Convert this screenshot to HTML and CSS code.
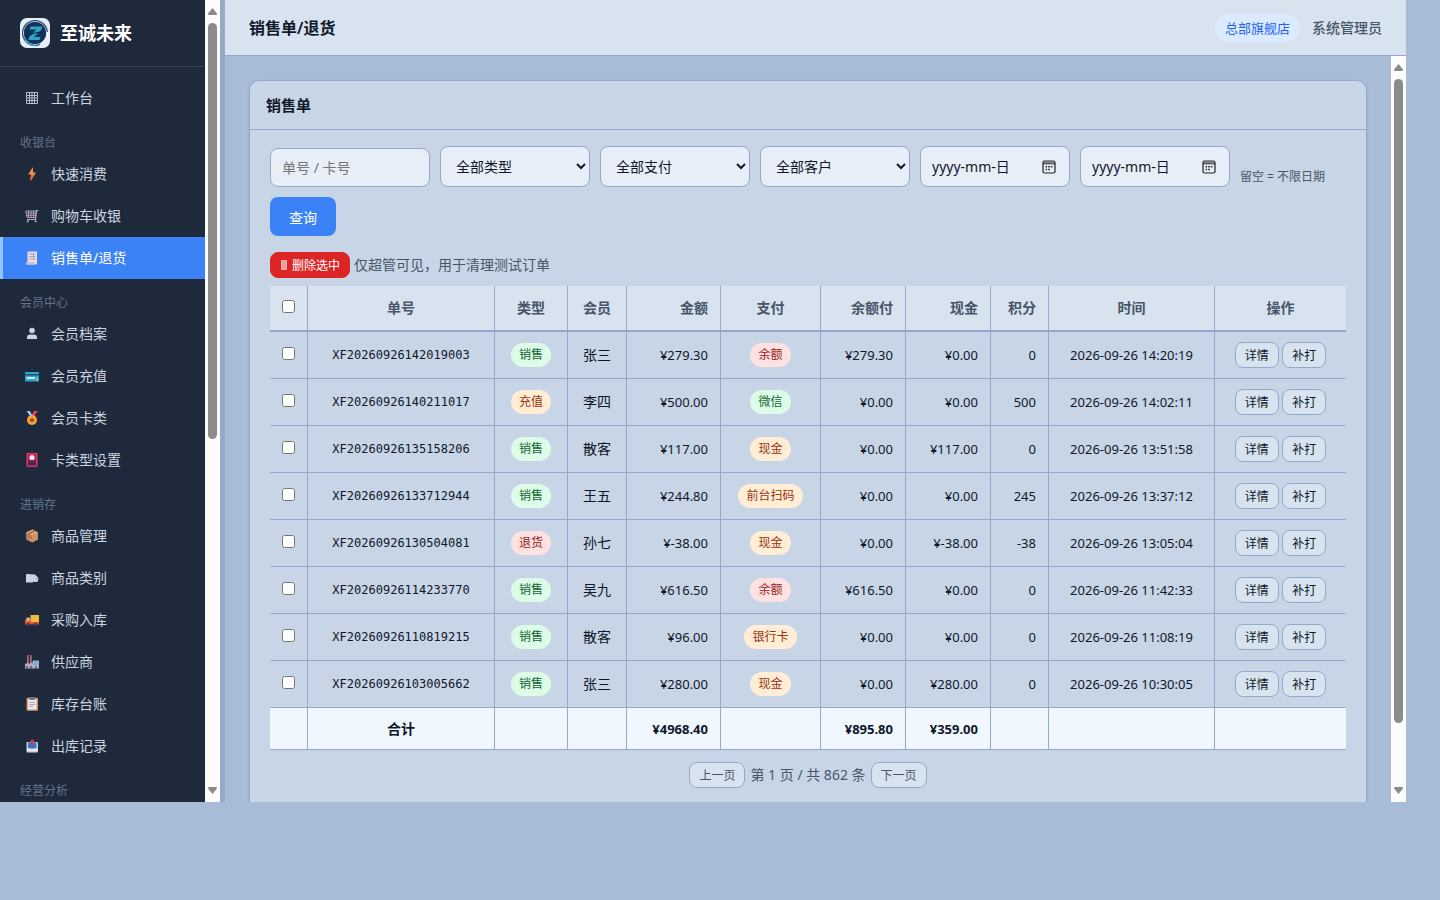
FILE: index.html
```html
<!DOCTYPE html>
<html lang="zh-CN">
<head>
    <meta charset="UTF-8">
    <meta name="viewport" content="width=device-width, initial-scale=1.0">
    <title>销售单/退货</title>
    <link rel="stylesheet" href="styles.css">
</head>
<body>
    <div class="app">
        <aside class="sidebar">
            <div class="sidebar-inner">
                <div class="brand">
                    <svg class="brand-logo" viewBox="0 0 30 30" aria-hidden="true">
                        <rect width="30" height="30" rx="7" fill="#e6edf5"/>
                        <circle cx="15" cy="15" r="13" fill="#1a3d6e"/>
                        <circle cx="15" cy="15" r="11.6" fill="none" stroke="#c3cfdd" stroke-width="1"/>
                        <circle cx="15" cy="15" r="10.8" fill="#12305c"/>
                        <path d="M5 22A12.3 12.3 0 0 0 16 27.3" fill="none" stroke="#2aa3bd" stroke-width="1.8"/>
                        <path d="M27.5 14A12.5 12.5 0 0 1 20 26.5" fill="none" stroke="#f4f7fa" stroke-width="1.8"/>
                        <path d="M10.5 8.500H22.500L21.500 11.500L14 19H20.500L19.500 22H8.500L9.500 18.500L16.500 11.500H9.500Z" fill="#2fa5bf"/>
                        <path d="M7 19.500Q12 14 23.500 14" fill="none" stroke="#0d2850" stroke-width="1"/>
                    </svg>
                    <span class="brand-name">至诚未来</span>
                </div>
                <nav class="nav">
                    <a class="nav-item" href="#"><span class="nav-icon"><svg viewBox="0 0 14 14"><path d="M1.500 1.500H12.500V12.500H1.500ZM4.500 1V13M7 1V13M9.500 1V13M1 4.500H13M1 7H13M1 9.500H13" fill="none" stroke="#b4c0d0"/></svg></span>工作台</a>
                    <div class="nav-title">收银台</div>
                    <a class="nav-item" href="#"><span class="nav-icon"><svg viewBox="0 0 14 14"><path d="M8 0L3 7.500H6L5.500 14L11 5.500H8Z" fill="#fb923c"/><path d="M6 7.500L5.500 14L8 10V7Z" fill="#ef6a4c"/></svg></span>快速消费</a>
                    <a class="nav-item" href="#"><span class="nav-icon"><svg viewBox="0 0 14 14"><path d="M13.500 1.500H11.500L10.500 10.500H2" fill="none" stroke="#b8adc2" stroke-width="1.200"/><path d="M.8 2H11L10.500 8.500H2ZM3.500 2V8.500M6 2V8.500M8.500 2V8.500M1 4.200H11M1.500 6.400H11" fill="none" stroke="#a99fb4"/><circle cx="2.800" cy="12.200" r="1.200" fill="#8591a8"/><circle cx="10.800" cy="12.200" r="1.200" fill="#8591a8"/></svg></span>购物车收银</a>
                    <a class="nav-item active" href="#"><span class="nav-icon"><svg viewBox="0 0 14 14"><path d="M2.500.5H12V13.500H1V11H2.500Z" fill="#e6dfec"/><path d="M4 3H10.500M4 5.500H10.500M4 8H10.500M8.500 2.500V8.500" stroke="#aaa0b8" fill="none"/><path d="M1 11H9.500V13.500H1Z" fill="#c9bfd3"/></svg></span>销售单/退货</a>
                    <div class="nav-title">会员中心</div>
                    <a class="nav-item" href="#"><span class="nav-icon"><svg viewBox="0 0 14 14"><circle cx="7" cy="3.500" r="2.800" fill="#cbd5e1"/><path d="M2 12V10.500Q2 7.500 5 7.500H9Q12 7.500 12 10.500V12Z" fill="#cbd5e1"/></svg></span>会员档案</a>
                    <a class="nav-item" href="#"><span class="nav-icon"><svg viewBox="0 0 14 14"><rect y="3" width="14" height="9.500" rx="1" fill="#2fa6d3"/><path d="M0 5H14V6.500H0Z" fill="#1b4a6b"/><path d="M1.800 8H10V10H1.800Z" fill="#d9e7ef"/><path d="M11.500 9.500H13V11.500H11.500Z" fill="#f5c344"/></svg></span>会员充值</a>
                    <a class="nav-item" href="#"><span class="nav-icon"><svg viewBox="0 0 14 14"><path d="M1 0H5L8 5L6 6.500Z" fill="#3487d6"/><path d="M13 0H9L6 5L8 6.500Z" fill="#e63c6d"/><path d="M2.500 0H4L7.500 5.500H6Z" fill="#f3eff5"/><circle cx="7" cy="9" r="5" fill="#f8a531"/><path d="M7 6L7.900 8L10 8.200L8.400 9.600L8.900 11.600L7 10.600L5.100 11.600L5.600 9.600L4 8.200L6.100 8Z" fill="#8c4b3a"/></svg></span>会员卡类</a>
                    <a class="nav-item" href="#"><span class="nav-icon"><svg viewBox="0 0 14 14"><rect x="1.500" width="11" height="14" rx="1" fill="#e93169"/><rect x="3" y="1.500" width="8" height="11" fill="#a81e5c"/><circle cx="7" cy="4.500" r="2.600" fill="#f7e9ee"/><path d="M3 8.500Q7 6.500 11 8.500V12.500H3Z" fill="#4c2a55"/></svg></span>卡类型设置</a>
                    <div class="nav-title">进销存</div>
                    <a class="nav-item" href="#"><span class="nav-icon"><svg viewBox="0 0 14 14"><path d="M7.500.5L13 3.500V10.500L7 13.500L1 10.500V3.500Z" fill="#b87a58"/><path d="M7.500.5L13 3.500L7 6.500L1 3.500Z" fill="#e3a878"/><path d="M7 6.500L13 3.500V10.500L7 13.500Z" fill="#cf9065"/><path d="M3.500 4.800L9.800 1.800" stroke="#86502f" stroke-width="1.200"/><circle cx="5.500" cy="11" r=".8" fill="#f0d9e4"/></svg></span>商品管理</a>
                    <a class="nav-item" href="#"><span class="nav-icon"><svg viewBox="0 0 14 14"><path d="M1 4Q1 2.500 2.500 3L10 3.500L13.500 7L12.500 11H9.500L8.500 10.500L7.500 11.500H1Z" fill="#cbd5e1"/><circle cx="11.500" cy="7.500" r=".6" fill="#64748b"/></svg></span>商品类别</a>
                    <a class="nav-item" href="#"><span class="nav-icon"><svg viewBox="0 0 14 14"><path d="M5.500 2H14V9H5.500Z" fill="#efbb3c"/><path d="M0 8L1.500 4.500H5.500V11H0Z" fill="#f26c2d"/><path d="M1.500 7.500L2.300 5H4.500V7.500Z" fill="#8bd6f5"/><path d="M0 9H14V11.500H0Z" fill="#e44b2d"/><circle cx="3" cy="11.500" r="1.700" fill="#4b3a58"/><circle cx="10.500" cy="11.500" r="1.700" fill="#4b3a58"/></svg></span>采购入库</a>
                    <a class="nav-item" href="#"><span class="nav-icon"><svg viewBox="0 0 14 14"><path d="M2 0H3.700V9H2ZM5 0H6.700V9H5Z" fill="#b26486"/><path d="M0 9L3.500 7.500V9L7 7.500V9L8 5.500H14V13.500H0Z" fill="#b2aabd"/><path d="M9.500 6.500H13V10H9.500Z" fill="#54bce4"/><path d="M1 11H3V13.500H1ZM5 11H7V13.500H5ZM10 11.500H12V13.500H10Z" fill="#6d5f7a"/></svg></span>供应商</a>
                    <a class="nav-item" href="#"><span class="nav-icon"><svg viewBox="0 0 14 14"><rect x="1.500" y=".8" width="11.500" height="13" rx="1" fill="#d6935b"/><path d="M3 2H11.500V12.500H3Z" fill="#efe8f3"/><path d="M4.500 0H10V3H4.500Z" fill="#7a7385"/><path d="M4.500 5.500H10M4.500 7.500H10M4.500 9.500H8" stroke="#a99fb8" fill="none"/></svg></span>库存台账</a>
                    <a class="nav-item" href="#"><span class="nav-icon"><svg viewBox="0 0 14 14"><rect x="1.500" y="3" width="11.500" height="10.500" rx="1" fill="#d7cfe0"/><path d="M3 3.500H11.500V9.500H3Z" fill="#1d7fd0"/><path d="M2 9.500H5L6 10.800H8.500L9.500 9.500H12.500V12H2Z" fill="#ece6f2"/><path d="M7.200 0L10.200 3.500H8.200V8H6.200V3.500H4.200Z" fill="#e0314f"/></svg></span>出库记录</a>
                    <div class="nav-title">经营分析</div>
                </nav>
            </div>
            <div class="scrollbar" aria-hidden="true">
                <svg class="scroll-arrow" viewBox="0 0 9 7"><path d="M4.500 0L9 5.500Q9 7 8 7H1Q0 7 0 5.500Z" fill="#8b8b8b"/></svg>
                <div class="scroll-track"><div class="scroll-thumb thumb-side"></div></div>
                <svg class="scroll-arrow" viewBox="0 0 9 7"><path d="M4.500 7L9 1.500Q9 0 8 0H1Q0 0 0 1.500Z" fill="#8b8b8b"/></svg>
            </div>
        </aside>

        <div class="main">
            <header class="topbar">
                <h1>销售单/退货</h1>
                <div class="topbar-right">
                    <span class="store">总部旗舰店</span>
                    <span class="user">系统管理员</span>
                </div>
            </header>

            <div class="content-wrap">
                <main class="content">
                    <section class="card">
                        <div class="card-header"><h2>销售单</h2></div>
                        <div class="card-body">
                            <form class="filters">
                                <input class="field keyword" type="text" placeholder="单号 / 卡号" aria-label="单号 / 卡号">
                                <select class="field" aria-label="类型"><option>全部类型</option></select>
                                <select class="field" aria-label="支付"><option>全部支付</option></select>
                                <select class="field" aria-label="客户"><option>全部客户</option></select>
                                <label class="field date">
                                    <input type="text" placeholder="yyyy-mm-日" aria-label="开始日期">
                                    <svg viewBox="0 0 14 14"><rect x="1" y="1" width="12" height="12" rx="1.500" fill="none" stroke="#1e1e1e" stroke-width="1.200"/><path d="M1 3.800H13" stroke="#1e1e1e"/><path d="M1.600 2.500H12.400" stroke="#777" stroke-width="1.500"/><path d="M6.200 6.800H7.700M8.800 6.800H10.300M3.600 9.500H5.100M6.200 9.500H7.700M3.600 6.800H5.100" stroke="#1e1e1e" stroke-width="1.400"/></svg>
                                </label>
                                <label class="field date">
                                    <input type="text" placeholder="yyyy-mm-日" aria-label="结束日期">
                                    <svg viewBox="0 0 14 14"><rect x="1" y="1" width="12" height="12" rx="1.500" fill="none" stroke="#1e1e1e" stroke-width="1.200"/><path d="M1 3.800H13" stroke="#1e1e1e"/><path d="M1.600 2.500H12.400" stroke="#777" stroke-width="1.500"/><path d="M6.200 6.800H7.700M8.800 6.800H10.300M3.600 9.500H5.100M6.200 9.500H7.700M3.600 6.800H5.100" stroke="#1e1e1e" stroke-width="1.400"/></svg>
                                </label>
                                <span class="hint">留空 = 不限日期</span>
                                <button type="button" class="btn-primary">查询</button>
                            </form>

                            <div class="batch">
                                <button type="button" class="btn-sm btn-danger"><svg viewBox="0 0 8 12"><path d="M1 1H7V11H1Z" fill="#f6b4b4"/><path d="M3 2V10M5 2V10" stroke="#ee8888"/></svg>删除选中</button>
                                <span>仅超管可见，用于清理测试订单</span>
                            </div>

                            <table class="orders">
                                <colgroup>
                                    <col class="c-check"><col class="c-no"><col class="c-type"><col class="c-member"><col class="c-amount"><col class="c-pay"><col class="c-money"><col class="c-money"><col class="c-points"><col class="c-time"><col>
                                </colgroup>
                                <thead>
                                    <tr>
                                        <th><input type="checkbox" aria-label="全选"></th>
                                        <th>单号</th>
                                        <th>类型</th>
                                        <th>会员</th>
                                        <th class="num">金额</th>
                                        <th>支付</th>
                                        <th class="num">余额付</th>
                                        <th class="num">现金</th>
                                        <th class="num">积分</th>
                                        <th>时间</th>
                                        <th>操作</th>
                                    </tr>
                                </thead>
                                <tbody>
                                    <tr>
                                        <td><input type="checkbox" aria-label="选择"></td>
                                        <td class="mono">XF20260926142019003</td>
                                        <td><span class="badge green">销售</span></td>
                                        <td>张三</td>
                                        <td class="num">¥279.30</td>
                                        <td><span class="badge red">余额</span></td>
                                        <td class="num">¥279.30</td>
                                        <td class="num">¥0.00</td>
                                        <td class="num">0</td>
                                        <td class="time">2026-09-26 14:20:19</td>
                                        <td><button type="button" class="btn-sm">详情</button> <button type="button" class="btn-sm">补打</button></td>
                                    </tr>
                                    <tr>
                                        <td><input type="checkbox" aria-label="选择"></td>
                                        <td class="mono">XF20260926140211017</td>
                                        <td><span class="badge orange">充值</span></td>
                                        <td>李四</td>
                                        <td class="num">¥500.00</td>
                                        <td><span class="badge green">微信</span></td>
                                        <td class="num">¥0.00</td>
                                        <td class="num">¥0.00</td>
                                        <td class="num">500</td>
                                        <td class="time">2026-09-26 14:02:11</td>
                                        <td><button type="button" class="btn-sm">详情</button> <button type="button" class="btn-sm">补打</button></td>
                                    </tr>
                                    <tr>
                                        <td><input type="checkbox" aria-label="选择"></td>
                                        <td class="mono">XF20260926135158206</td>
                                        <td><span class="badge green">销售</span></td>
                                        <td>散客</td>
                                        <td class="num">¥117.00</td>
                                        <td><span class="badge orange">现金</span></td>
                                        <td class="num">¥0.00</td>
                                        <td class="num">¥117.00</td>
                                        <td class="num">0</td>
                                        <td class="time">2026-09-26 13:51:58</td>
                                        <td><button type="button" class="btn-sm">详情</button> <button type="button" class="btn-sm">补打</button></td>
                                    </tr>
                                    <tr>
                                        <td><input type="checkbox" aria-label="选择"></td>
                                        <td class="mono">XF20260926133712944</td>
                                        <td><span class="badge green">销售</span></td>
                                        <td>王五</td>
                                        <td class="num">¥244.80</td>
                                        <td><span class="badge orange">前台扫码</span></td>
                                        <td class="num">¥0.00</td>
                                        <td class="num">¥0.00</td>
                                        <td class="num">245</td>
                                        <td class="time">2026-09-26 13:37:12</td>
                                        <td><button type="button" class="btn-sm">详情</button> <button type="button" class="btn-sm">补打</button></td>
                                    </tr>
                                    <tr>
                                        <td><input type="checkbox" aria-label="选择"></td>
                                        <td class="mono">XF20260926130504081</td>
                                        <td><span class="badge red">退货</span></td>
                                        <td>孙七</td>
                                        <td class="num">¥-38.00</td>
                                        <td><span class="badge orange">现金</span></td>
                                        <td class="num">¥0.00</td>
                                        <td class="num">¥-38.00</td>
                                        <td class="num">-38</td>
                                        <td class="time">2026-09-26 13:05:04</td>
                                        <td><button type="button" class="btn-sm">详情</button> <button type="button" class="btn-sm">补打</button></td>
                                    </tr>
                                    <tr>
                                        <td><input type="checkbox" aria-label="选择"></td>
                                        <td class="mono">XF20260926114233770</td>
                                        <td><span class="badge green">销售</span></td>
                                        <td>吴九</td>
                                        <td class="num">¥616.50</td>
                                        <td><span class="badge red">余额</span></td>
                                        <td class="num">¥616.50</td>
                                        <td class="num">¥0.00</td>
                                        <td class="num">0</td>
                                        <td class="time">2026-09-26 11:42:33</td>
                                        <td><button type="button" class="btn-sm">详情</button> <button type="button" class="btn-sm">补打</button></td>
                                    </tr>
                                    <tr>
                                        <td><input type="checkbox" aria-label="选择"></td>
                                        <td class="mono">XF20260926110819215</td>
                                        <td><span class="badge green">销售</span></td>
                                        <td>散客</td>
                                        <td class="num">¥96.00</td>
                                        <td><span class="badge orange">银行卡</span></td>
                                        <td class="num">¥0.00</td>
                                        <td class="num">¥0.00</td>
                                        <td class="num">0</td>
                                        <td class="time">2026-09-26 11:08:19</td>
                                        <td><button type="button" class="btn-sm">详情</button> <button type="button" class="btn-sm">补打</button></td>
                                    </tr>
                                    <tr>
                                        <td><input type="checkbox" aria-label="选择"></td>
                                        <td class="mono">XF20260926103005662</td>
                                        <td><span class="badge green">销售</span></td>
                                        <td>张三</td>
                                        <td class="num">¥280.00</td>
                                        <td><span class="badge orange">现金</span></td>
                                        <td class="num">¥0.00</td>
                                        <td class="num">¥280.00</td>
                                        <td class="num">0</td>
                                        <td class="time">2026-09-26 10:30:05</td>
                                        <td><button type="button" class="btn-sm">详情</button> <button type="button" class="btn-sm">补打</button></td>
                                    </tr>
                                </tbody>
                                <tfoot>
                                    <tr>
                                        <td></td>
                                        <td>合计</td>
                                        <td></td>
                                        <td></td>
                                        <td class="num">¥4968.40</td>
                                        <td></td>
                                        <td class="num">¥895.80</td>
                                        <td class="num">¥359.00</td>
                                        <td></td>
                                        <td></td>
                                        <td></td>
                                    </tr>
                                </tfoot>
                            </table>

                            <div class="pager">
                                <button type="button" class="btn-sm">上一页</button>
                                <span>第 1 页 / 共 862 条</span>
                                <button type="button" class="btn-sm">下一页</button>
                            </div>
                        </div>
                    </section>
                </main>
                <div class="scrollbar" aria-hidden="true">
                    <svg class="scroll-arrow" viewBox="0 0 9 7"><path d="M4.500 0L9 5.500Q9 7 8 7H1Q0 7 0 5.500Z" fill="#8b8b8b"/></svg>
                    <div class="scroll-track"><div class="scroll-thumb thumb-main"></div></div>
                    <svg class="scroll-arrow" viewBox="0 0 9 7"><path d="M4.500 7L9 1.500Q9 0 8 0H1Q0 0 0 1.500Z" fill="#8b8b8b"/></svg>
                </div>
            </div>
        </div>
    </div>
</body>
</html>
```
FILE: styles.css
```css
* {
    box-sizing: border-box;
}
body {
    margin: 0;
    background: #a8bcd8;
    color: #0f172a;
    font-family: "Noto Sans", "Noto Sans CJK SC", sans-serif;
    font-size: 14px;
    line-height: 20px;
}
button, input, select {
    font-family: inherit;
    color: inherit;
}
h1, h2 {
    margin: 0;
}
.app {
    display: flex;
    height: calc(100vh - 98px);
    margin-right: 34px;
    overflow: hidden;
}

/* sidebar */
.sidebar {
    display: flex;
    flex: none;
    width: 225px;
    background: #1e293b;
    border-right: 5px solid #94a9c9;
}
.sidebar-inner {
    flex: 1;
    overflow: hidden;
}
.brand {
    display: flex;
    align-items: center;
    gap: 10px;
    padding: 18px 20px;
    border-bottom: 1px solid #334155;
}
.brand-logo {
    width: 30px;
    height: 30px;
}
.brand-name {
    color: #fff;
    font-size: 18px;
    font-weight: 700;
}
.nav {
    padding-top: 10px;
}
.nav-item {
    display: flex;
    align-items: center;
    gap: 7px;
    height: 42px;
    padding-left: 17px;
    border-left: 3px solid transparent;
    color: #cbd5e1;
    text-decoration: none;
}
.nav-item.active {
    background: #3b82f6;
    border-left-color: #93c5fd;
    color: #fff;
}
.nav-icon {
    display: flex;
    justify-content: center;
    width: 24px;
}
.nav-icon svg {
    width: 14px;
    height: 14px;
}
.nav-title {
    padding: 14px 20px 0;
    color: #64748b;
    font-size: 12px;
}

/* scrollbars */
.scrollbar {
    display: flex;
    flex-direction: column;
    align-items: center;
    flex: none;
    width: 15px;
    padding: 8px 0;
    background: #fcfcfc;
}
.scroll-arrow {
    width: 9px;
    height: 7px;
}
.scroll-track {
    flex: 1;
    padding: 8px 0;
}
.scroll-thumb {
    width: 9px;
    border-radius: 5px;
    background: #8b8b8b;
}
.thumb-side {
    height: 55%;
}
.thumb-main {
    height: 92%;
}

/* top bar */
.main {
    display: flex;
    flex-direction: column;
    flex: 1;
    min-width: 0;
}
.topbar {
    display: flex;
    align-items: center;
    justify-content: space-between;
    flex: none;
    height: 56px;
    padding: 0 24px;
    background: #d7e3ee;
    border-bottom: 1px solid #94a9c9;
}
.topbar h1 {
    font-size: 16px;
    font-weight: 600;
}
.topbar-right {
    display: flex;
    align-items: center;
    gap: 12px;
}
.store {
    padding: 4px 10px;
    border-radius: 14px;
    background: #dbeafe;
    color: #2563eb;
    font-size: 13px;
}
.user {
    color: #475569;
    font-weight: 500;
}

/* content */
.content-wrap {
    display: flex;
    flex: 1;
    min-height: 0;
}
.content {
    flex: 1;
    min-width: 0;
    padding: 24px;
    overflow: hidden;
}
.card {
    background: #c8d5e6;
    border: 1px solid #94a9c9;
    border-radius: 10px;
    box-shadow: 0 1px 3px rgba(15, 23, 42, 0.12);
}
.card-header {
    padding: 14px 16px;
    border-bottom: 1px solid #94a9c9;
}
.card-header h2 {
    font-size: 15px;
    font-weight: 600;
}
.card-body {
    padding: 16px 20px 32px;
}
.filters {
    display: flex;
    flex-wrap: wrap;
    align-items: flex-end;
    gap: 10px;
}
.field {
    width: 150px;
    height: 41px;
    padding: 0 11px;
    background-color: #e8eef8;
    border: 1px solid #94a9c9;
    border-radius: 8px;
    font-size: 14px;
}
.keyword {
    width: 160px;
    height: 39px;
}
.date {
    display: flex;
    align-items: center;
    justify-content: space-between;
}
.date input {
    width: 100px;
    padding: 0;
    border: none;
    background: transparent;
    font-size: 14px;
}
.date input::placeholder {
    color: #0f172a;
}
.date svg {
    width: 14px;
    height: 14px;
    margin-right: 2px;
}
.hint {
    color: #475569;
    font-size: 12px;
}
.btn-primary {
    height: 39px;
    padding: 0 19px;
    border: none;
    border-radius: 8px;
    background: #3b82f6;
    color: #fff;
    font-size: 14px;
}
.btn-sm {
    height: 26px;
    padding: 0 9px;
    border: 1px solid #94a9c9;
    border-radius: 8px;
    background: #d7e3ee;
    font-size: 12px;
}
.btn-danger {
    display: flex;
    align-items: center;
    gap: 4px;
    border-color: #dc2626;
    background: #dc2626;
    color: #fff;
}
.btn-danger svg {
    width: 8px;
    height: 12px;
}
.batch {
    display: flex;
    align-items: center;
    gap: 4px;
    margin: 16px 0 8px;
    color: #475569;
}

/* orders table */
.orders {
    width: 100%;
    table-layout: fixed;
    border-collapse: separate;
    border-spacing: 0;
    text-align: center;
}
.c-check { width: 38px; }
.c-no { width: 187px; }
.c-type { width: 73px; }
.c-member { width: 59px; }
.c-amount { width: 94px; }
.c-pay { width: 100px; }
.c-money { width: 85px; }
.c-points { width: 58px; }
.c-time { width: 166px; }
.orders th, .orders td {
    height: 47px;
    padding: 0;
    border-right: 1px solid #94a9c9;
    border-bottom: 1px solid #94a9c9;
    white-space: nowrap;
}
.orders th:last-child, .orders td:last-child {
    border-right: none;
}
.orders th {
    height: 46px;
    border-bottom-width: 2px;
    background: #d7e3ee;
    color: #475569;
    font-weight: 600;
}
.orders .num {
    padding-right: 12px;
    text-align: right;
}
.orders td.num, .orders .time {
    font-size: 13px;
}
.orders .mono {
    font-family: "DejaVu Sans Mono", monospace;
    font-size: 12px;
}
.orders tfoot td {
    height: 42px;
    background: #f0f7ff;
    font-weight: 700;
}
.orders input {
    margin: 0;
}
.badge {
    display: inline-block;
    padding: 2px 8px;
    border-radius: 12px;
    font-size: 12px;
}
.green {
    background: #dcfce7;
    color: #166534;
}
.orange {
    background: #ffedd5;
    color: #9a3412;
}
.red {
    background: #fee2e2;
    color: #991b1b;
}
.pager {
    display: flex;
    align-items: center;
    justify-content: center;
    gap: 5px;
    margin-top: 12px;
    color: #475569;
}
```
